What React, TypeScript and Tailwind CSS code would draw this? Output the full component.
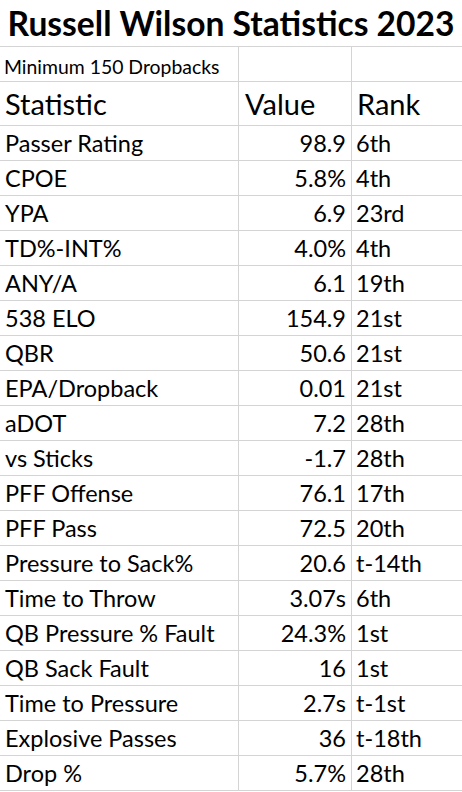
import React from "react";

const rows: [string, string, string][] = [
  ["Passer Rating", "98.9", "6th"],
  ["CPOE", "5.8%", "4th"],
  ["YPA", "6.9", "23rd"],
  ["TD%-INT%", "4.0%", "4th"],
  ["ANY/A", "6.1", "19th"],
  ["538 ELO", "154.9", "21st"],
  ["QBR", "50.6", "21st"],
  ["EPA/Dropback", "0.01", "21st"],
  ["aDOT", "7.2", "28th"],
  ["vs Sticks", "-1.7", "28th"],
  ["PFF Offense", "76.1", "17th"],
  ["PFF Pass", "72.5", "20th"],
  ["Pressure to Sack%", "20.6", "t-14th"],
  ["Time to Throw", "3.07s", "6th"],
  ["QB Pressure % Fault", "24.3%", "1st"],
  ["QB Sack Fault", "16", "1st"],
  ["Time to Pressure", "2.7s", "t-1st"],
  ["Explosive Passes", "36", "t-18th"],
  ["Drop %", "5.7%", "28th"],
];

export default function App() {
  return (
    <div
      className="w-[462px] h-[792px] bg-white text-black overflow-hidden"
      style={{ fontFamily: "Lato, 'Liberation Sans', sans-serif" }}
    >
      <div className="h-[47px] border-b border-[#d4d4d4] flex items-end justify-center pb-[5px]">
        <span className="text-[33.6px] font-bold leading-none whitespace-nowrap">
          Russell Wilson Statistics 2023
        </span>
      </div>
      <div className="grid grid-cols-[239px_113px_1fr]">
        <div className="h-[35px] border-b border-r border-[#d4d4d4] flex items-end pl-[4px] pb-[5px]">
          <span className="text-[19.4px] leading-none whitespace-nowrap">Minimum 150 Dropbacks</span>
        </div>
        <div className="h-[35px] border-b border-r border-[#d4d4d4]" />
        <div className="h-[35px] border-b border-[#d4d4d4]" />

        <div className="h-[44px] border-b border-r border-[#d4d4d4] flex items-end pl-[5px] pb-[7px]">
          <span className="text-[29px] leading-none">Statistic</span>
        </div>
        <div className="h-[44px] border-b border-r border-[#d4d4d4] flex items-end pl-[6px] pb-[7px]">
          <span className="text-[29px] leading-none">Value</span>
        </div>
        <div className="h-[44px] border-b border-[#d4d4d4] flex items-end pl-[5px] pb-[7px]">
          <span className="text-[29px] leading-none">Rank</span>
        </div>

        {rows.map(([s, v, r]) => (
          <React.Fragment key={s}>
            <div className="h-[35px] border-b border-r border-[#d4d4d4] flex items-end pl-[5px] pb-[5px]">
              <span className="text-[23.5px] leading-none whitespace-nowrap">{s}</span>
            </div>
            <div className="h-[35px] border-b border-r border-[#d4d4d4] flex items-end justify-end pr-[5px] pb-[5px]">
              <span className="text-[23.5px] leading-none">{v}</span>
            </div>
            <div className="h-[35px] border-b border-[#d4d4d4] flex items-end pl-[4px] pb-[5px]">
              <span className="text-[23.5px] leading-none whitespace-nowrap">{r}</span>
            </div>
          </React.Fragment>
        ))}
      </div>
    </div>
  );
}
